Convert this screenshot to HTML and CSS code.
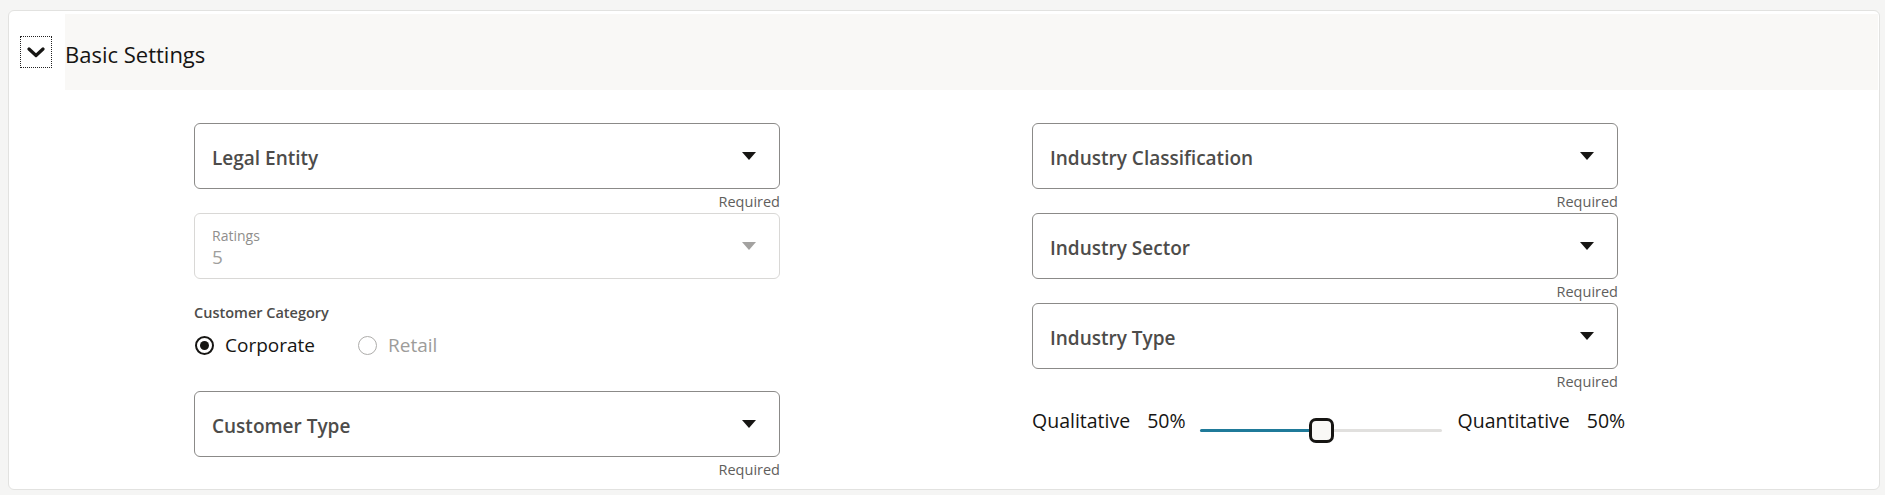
FILE: index.html
```html
<!DOCTYPE html>
<html>
<head>
  <meta charset="utf-8">
  <title>Basic Settings</title>
  <link rel="stylesheet" href="styles.css">
</head>
<body>
  <div class="card">
    <div class="section-head">
      <button class="toggle-btn" aria-expanded="true">
        <svg width="18" height="11" viewBox="0 0 18 11"><path d="M2 2 L9 8.5 L16 2" fill="none" stroke="#161513" stroke-width="3.2" stroke-linecap="round" stroke-linejoin="round"/></svg>
      </button>
      <div class="section-title">Basic Settings</div>
    </div>

    <div class="form-grid">
      <div class="form-col">
        <div class="field">
          <div class="select-box">
            <span class="select-label">Legal Entity</span>
            <span class="caret"></span>
          </div>
          <div class="helper">Required</div>
        </div>

        <div class="field">
          <div class="select-box disabled">
            <div class="select-value">
              <span class="inside-label">Ratings</span>
              <span class="value">5</span>
            </div>
            <span class="caret"></span>
          </div>
        </div>

        <div class="radio-set">
          <div class="radio-title">Customer Category</div>
          <div class="radio-row">
            <label class="radio checked"><span class="dot"></span>Corporate</label>
            <label class="radio disabled"><span class="dot"></span>Retail</label>
          </div>
        </div>

        <div class="field">
          <div class="select-box">
            <span class="select-label">Customer Type</span>
            <span class="caret"></span>
          </div>
          <div class="helper">Required</div>
        </div>
      </div>

      <div class="form-col">
        <div class="field">
          <div class="select-box">
            <span class="select-label">Industry Classification</span>
            <span class="caret"></span>
          </div>
          <div class="helper">Required</div>
        </div>

        <div class="field">
          <div class="select-box">
            <span class="select-label">Industry Sector</span>
            <span class="caret"></span>
          </div>
          <div class="helper">Required</div>
        </div>

        <div class="field">
          <div class="select-box">
            <span class="select-label">Industry Type</span>
            <span class="caret"></span>
          </div>
          <div class="helper">Required</div>
        </div>

        <div class="weight-row">
          <span class="weight-name">Qualitative</span>
          <span class="weight-pct">50%</span>
          <div class="slider">
            <div class="slider-fill" style="width: 50%;"></div>
            <div class="slider-thumb" style="left: 50%;"></div>
          </div>
          <span class="weight-name">Quantitative</span>
          <span class="weight-pct">50%</span>
        </div>
      </div>
    </div>
  </div>
</body>
</html>
```

FILE: styles.css
```css
body {
  margin: 0;
  padding: 10px 5px 4px 8px;
  background-color: #f5f5f4;
  font-family: "Open Sans", "Noto Sans", Arial, sans-serif;
  color: #161513;
}

.card {
  background-color: #fff;
  border: 1px solid #e2e2e0;
  border-radius: 6px;
  padding: 3px 1px 8px 0;
}

.section-head {
  display: flex;
  align-items: center;
}

.toggle-btn {
  width: 32px;
  height: 32px;
  margin-left: 11px;
  margin-right: 13px;
  padding: 0;
  border: 1px dotted #222;
  background: none;
  display: flex;
  align-items: center;
  justify-content: center;
}

.section-title {
  flex: 1;
  height: 76px;
  display: flex;
  align-items: center;
  background-color: #f9f8f6;
  font-size: 22px;
  padding-top: 3px;
  box-sizing: border-box;
}

.form-grid {
  display: grid;
  grid-template-columns: 586px 586px;
  column-gap: 252px;
  padding-left: 185px;
  margin-top: 33px;
}

.form-col {
  display: flex;
  flex-direction: column;
}

.select-box {
  height: 66px;
  box-sizing: border-box;
  border: 1px solid #8b8a88;
  border-radius: 6px;
  display: flex;
  align-items: center;
  justify-content: space-between;
  padding: 0 23px 0 17px;
}

.select-label {
  font-size: 19px;
  font-weight: 600;
  color: #4d4c4a;
  padding-top: 4px;
}

.caret {
  width: 0;
  height: 0;
  border-left: 7.5px solid transparent;
  border-right: 7.5px solid transparent;
  border-top: 8px solid #161513;
}

.select-box.disabled {
  border-color: #d9d8d6;
}

.select-box.disabled .caret {
  border-top-color: #a3a2a0;
}

.select-value {
  display: flex;
  flex-direction: column;
  padding-top: 4px;
}

.inside-label {
  font-size: 14px;
  line-height: 18px;
  color: #8f8e8c;
}

.value {
  font-size: 19px;
  line-height: 24px;
  color: #a09f9d;
}

.helper {
  height: 24px;
  box-sizing: border-box;
  padding-top: 3px;
  font-size: 14.5px;
  line-height: 20px;
  text-align: right;
  color: #5f5e5c;
}

.radio-set {
  margin-top: 24px;
  margin-bottom: 30px;
}

.radio-title {
  font-size: 14.5px;
  font-weight: 600;
  line-height: 20px;
  color: #4d4c4a;
}

.radio-row {
  display: flex;
  align-items: center;
  height: 32px;
  margin-top: 6px;
  padding-left: 1px;
}

.radio {
  display: flex;
  align-items: center;
  font-size: 19px;
  margin-right: 43px;
}

.radio .dot {
  width: 19px;
  height: 19px;
  box-sizing: border-box;
  border-radius: 50%;
  border: 2px solid #161513;
  margin-right: 11px;
  display: flex;
  align-items: center;
  justify-content: center;
}

.radio.checked .dot:after {
  content: "";
  width: 9px;
  height: 9px;
  border-radius: 50%;
  background-color: #161513;
}

.radio.disabled {
  color: #9d9c9a;
}

.radio.disabled .dot {
  border: 1.5px solid #aeadab;
}

.weight-row {
  display: flex;
  align-items: flex-start;
  margin-top: 16px;
  font-size: 19.5px;
  line-height: 24px;
  white-space: nowrap;
}

.weight-row > * {
  flex: none;
}

.weight-pct {
  margin-left: 16px;
}

.weight-name + .weight-pct {
  margin-left: 17px;
}

.slider {
  position: relative;
  width: 242px;
  height: 3px;
  margin: 20px 16px 0 14px;
  background-color: #e1e0de;
  border-radius: 2px;
}

.slider-fill {
  height: 100%;
  background-color: #1f7a99;
  border-radius: 2px;
}

.slider-thumb {
  position: absolute;
  top: -11px;
  width: 25px;
  height: 25px;
  margin-left: -12px;
  box-sizing: border-box;
  border: 3px solid #161513;
  border-radius: 7px;
  background-color: #f9f8f6;
}
```
